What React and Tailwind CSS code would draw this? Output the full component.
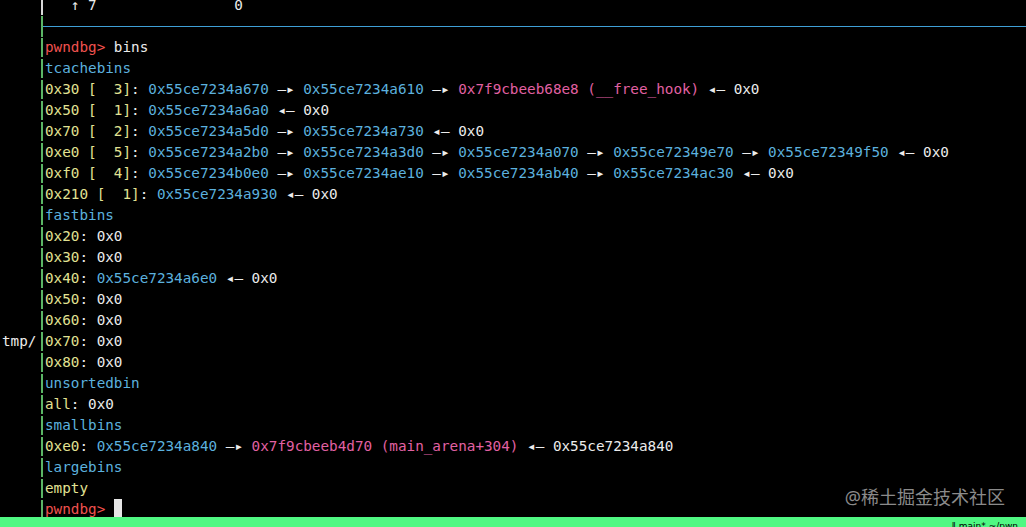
import React from 'react';

const Y = 'text-[#e2e293]';
const B = 'text-[#5cb1de]';
const P = 'text-[#e261a3]';
const W = 'text-[#ececec]';
const R = 'text-[#f0524f]';

const rows = [
  [[R, 'pwndbg>'], [W, ' bins']],
  [[B, 'tcachebins']],
  [[Y, '0x30 [  3]'], [W, ': '], [B, '0x55ce7234a670'], [W, ' —▸ '], [B, '0x55ce7234a610'], [W, ' —▸ '], [P, '0x7f9cbeeb68e8 (__free_hook)'], [W, ' ◂— 0x0']],
  [[Y, '0x50 [  1]'], [W, ': '], [B, '0x55ce7234a6a0'], [W, ' ◂— 0x0']],
  [[Y, '0x70 [  2]'], [W, ': '], [B, '0x55ce7234a5d0'], [W, ' —▸ '], [B, '0x55ce7234a730'], [W, ' ◂— 0x0']],
  [[Y, '0xe0 [  5]'], [W, ': '], [B, '0x55ce7234a2b0'], [W, ' —▸ '], [B, '0x55ce7234a3d0'], [W, ' —▸ '], [B, '0x55ce7234a070'], [W, ' —▸ '], [B, '0x55ce72349e70'], [W, ' —▸ '], [B, '0x55ce72349f50'], [W, ' ◂— 0x0']],
  [[Y, '0xf0 [  4]'], [W, ': '], [B, '0x55ce7234b0e0'], [W, ' —▸ '], [B, '0x55ce7234ae10'], [W, ' —▸ '], [B, '0x55ce7234ab40'], [W, ' —▸ '], [B, '0x55ce7234ac30'], [W, ' ◂— 0x0']],
  [[Y, '0x210 [  1]'], [W, ': '], [B, '0x55ce7234a930'], [W, ' ◂— 0x0']],
  [[B, 'fastbins']],
  [[Y, '0x20'], [W, ': 0x0']],
  [[Y, '0x30'], [W, ': 0x0']],
  [[Y, '0x40'], [W, ': '], [B, '0x55ce7234a6e0'], [W, ' ◂— 0x0']],
  [[Y, '0x50'], [W, ': 0x0']],
  [[Y, '0x60'], [W, ': 0x0']],
  [[Y, '0x70'], [W, ': 0x0']],
  [[Y, '0x80'], [W, ': 0x0']],
  [[B, 'unsortedbin']],
  [[Y, 'all'], [W, ': 0x0']],
  [[B, 'smallbins']],
  [[Y, '0xe0'], [W, ': '], [B, '0x55ce7234a840'], [W, ' —▸ '], [P, '0x7f9cbeeb4d70 (main_arena+304)'], [W, ' ◂— 0x55ce7234a840']],
  [[B, 'largebins']],
  [[Y, 'empty']],
];

function Row({ gutter, border, children }) {
  return (
    <div className="flex h-[21px] shrink-0">
      <div className="w-[41px] shrink-0 pl-[2px] text-[#ececec]">{gutter}</div>
      <div className="flex items-center py-[1px]">
        <div className={`w-[2px] h-full ${border}`}></div>
      </div>
      <div className="pl-[2px] whitespace-pre">{children}</div>
    </div>
  );
}

export default function App() {
  return (
    <div className="relative w-[1026px] h-[527px] bg-black overflow-hidden flex flex-col font-['DejaVu_Sans_Mono',monospace] text-[14.3px] leading-[21px]">
      <div className="flex-1 min-h-0 overflow-hidden flex flex-col -mt-[5px]">
        <Row border="bg-[#d8d8d8]">
          <span className={W}>{'   ↑ 7                0'}</span>
        </Row>
        <div className="flex h-[21px] shrink-0">
          <div className="w-[41px] shrink-0"></div>
          <div className="w-[2px] h-full bg-[#5bb565]"></div>
          <div className="flex-1 flex items-center">
            <div className="w-full h-[1px] bg-[#3f9fd6]"></div>
          </div>
        </div>
        {rows.map((segs, i) => (
          <Row key={i} border="bg-[#5bb565]" gutter={i === 14 ? 'tmp/' : null}>
            {segs.map(([c, t], j) => (
              <span key={j} className={c}>{t}</span>
            ))}
          </Row>
        ))}
        <Row border="bg-[#5bb565]">
          <span className={R}>pwndbg&gt;</span>
          <span className={W}> </span>
          <span className="inline-block w-[8px] h-[20px] align-top bg-[#e6e6e6]"></span>
        </Row>
      </div>
      <div className="h-[10px] shrink-0 bg-[#50f883] flex justify-end overflow-hidden">
        <span className="pr-[8px] pt-[5px] text-[9px] leading-[9px] text-black font-['DejaVu_Sans',sans-serif]">‖ main* ~/pwn</span>
      </div>
      <div className="absolute right-[21px] top-[486px] text-[18px] leading-[22px] text-[#8b8b8b] font-['Noto_Sans','Noto_Sans_CJK_SC',sans-serif]">
        @稀土掘金技术社区
      </div>
    </div>
  );
}
